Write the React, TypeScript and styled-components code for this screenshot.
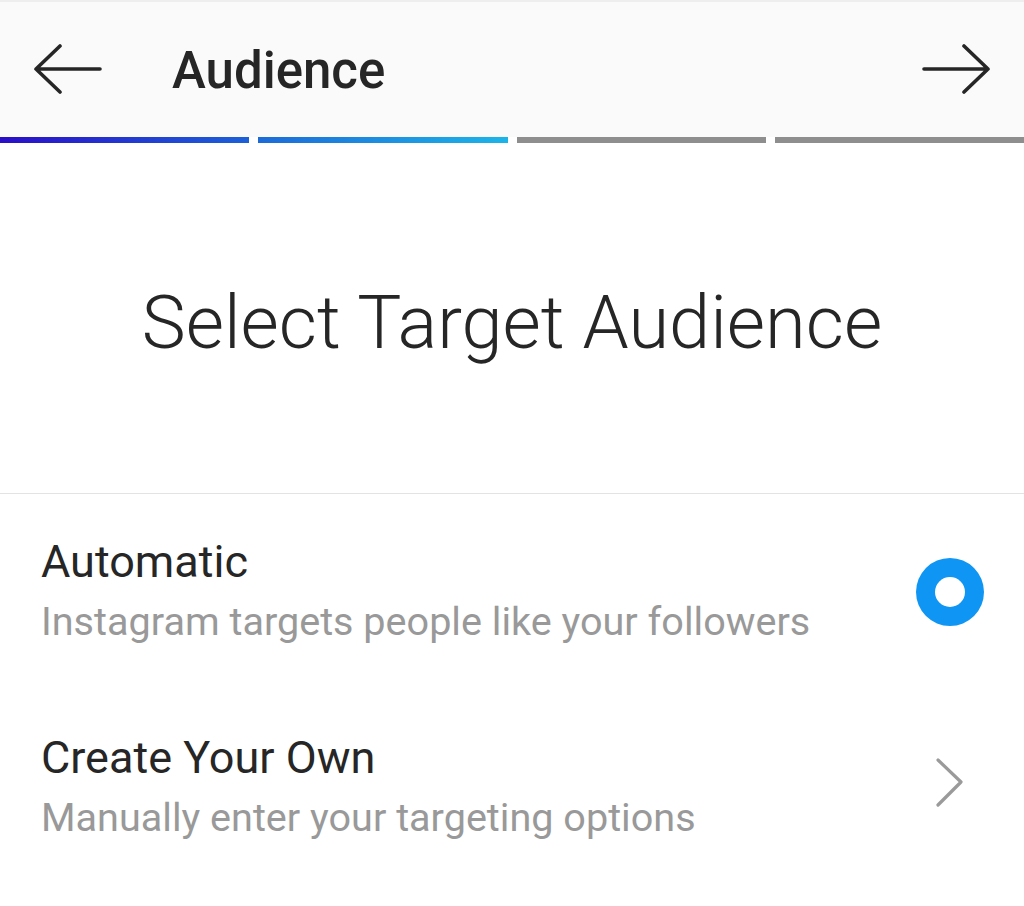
import React from "react";
import styled, { createGlobalStyle } from "styled-components";

const Global = createGlobalStyle`
  html, body { margin: 0; padding: 0; background: #ffffff; }
  body { font-family: Roboto, "Noto Sans", sans-serif; }
`;

const Page = styled.div`
  width: 1024px;
  height: 906px;
  background: #ffffff;
  display: flex;
  flex-direction: column;
  overflow: hidden;
`;

const Header = styled.header`
  height: 137px;
  box-sizing: border-box;
  background: #fafafa;
  border-top: 2px solid #eeeeee;
  display: flex;
  align-items: center;
  padding: 0 34px;
`;

const IconButton = styled.div`
  width: 68px;
  height: 52px;
  display: flex;
  align-items: center;
  justify-content: center;
  color: #262626;
`;

const HeaderTitle = styled.h1`
  flex: 1;
  margin: 2px 0 0 70px;
  font-size: 51px;
  font-weight: 500;
  color: #262626;
`;

const Progress = styled.div`
  display: grid;
  grid-template-columns: repeat(4, 1fr);
  column-gap: 9px;
  height: 6px;
`;

const Segment = styled.div<{ $bg: string }>`
  background: ${(p) => p.$bg};
`;

const Hero = styled.section`
  height: 350px;
  display: flex;
  align-items: center;
  justify-content: center;
  border-bottom: 1px solid #e3e3e3;
`;

const HeroTitle = styled.h2`
  margin: 8px 0 0 0;
  font-size: 74px;
  font-weight: 300;
  color: #262626;
`;

const Row = styled.div<{ $h: number }>`
  height: ${(p) => p.$h}px;
  display: flex;
  align-items: center;
  padding: 0 40px 0 41px;
`;

const RowText = styled.div`
  flex: 1;
  display: flex;
  flex-direction: column;
`;

const RowTitle = styled.div`
  font-size: 45px;
  line-height: 56px;
  color: #262626;
`;

const RowSub = styled.div`
  margin-top: 4px;
  font-size: 39.6px;
  line-height: 56px;
  color: #999999;
`;

const Radio = styled.div`
  width: 68px;
  height: 68px;
  border-radius: 50%;
  background: #0f95f4;
  display: flex;
  align-items: center;
  justify-content: center;
  &::after {
    content: "";
    width: 30px;
    height: 30px;
    border-radius: 50%;
    background: #ffffff;
  }
`;

const Chevron = styled.div`
  width: 68px;
  margin-top: -10px;
  display: flex;
  justify-content: center;
  color: #9a9a9a;
`;

export default function App() {
  return (
    <Page>
      <Global />
      <Header>
        <IconButton>
          <svg width="68" height="52" viewBox="0 0 68 52" fill="none" stroke="currentColor" strokeWidth="3.6" strokeLinecap="round" strokeLinejoin="round">
            <path d="M66 25H2M26 2L2 25L26 48" />
          </svg>
        </IconButton>
        <HeaderTitle>Audience</HeaderTitle>
        <IconButton>
          <svg width="68" height="52" viewBox="0 0 68 52" fill="none" stroke="currentColor" strokeWidth="3.6" strokeLinecap="round" strokeLinejoin="round">
            <path d="M2 25H66M42 2L66 25L42 48" />
          </svg>
        </IconButton>
      </Header>
      <Progress>
        <Segment $bg="linear-gradient(90deg, #2a0ec8, #1c60d8)" />
        <Segment $bg="linear-gradient(90deg, #1c6ad8, #1cb4e8)" />
        <Segment $bg="#8e8e8e" />
        <Segment $bg="#8e8e8e" />
      </Progress>
      <Hero>
        <HeroTitle>Select Target Audience</HeroTitle>
      </Hero>
      <Row $h={196}>
        <RowText>
          <RowTitle>Automatic</RowTitle>
          <RowSub>Instagram targets people like your followers</RowSub>
        </RowText>
        <Radio />
      </Row>
      <Row $h={196}>
        <RowText>
          <RowTitle>Create Your Own</RowTitle>
          <RowSub>Manually enter your targeting options</RowSub>
        </RowText>
        <Chevron>
          <svg width="30" height="50" viewBox="0 0 30 50" fill="none" stroke="currentColor" strokeWidth="3.2" strokeLinecap="round" strokeLinejoin="round">
            <path d="M3 2L26 24L3 47" />
          </svg>
        </Chevron>
      </Row>
    </Page>
  );
}
